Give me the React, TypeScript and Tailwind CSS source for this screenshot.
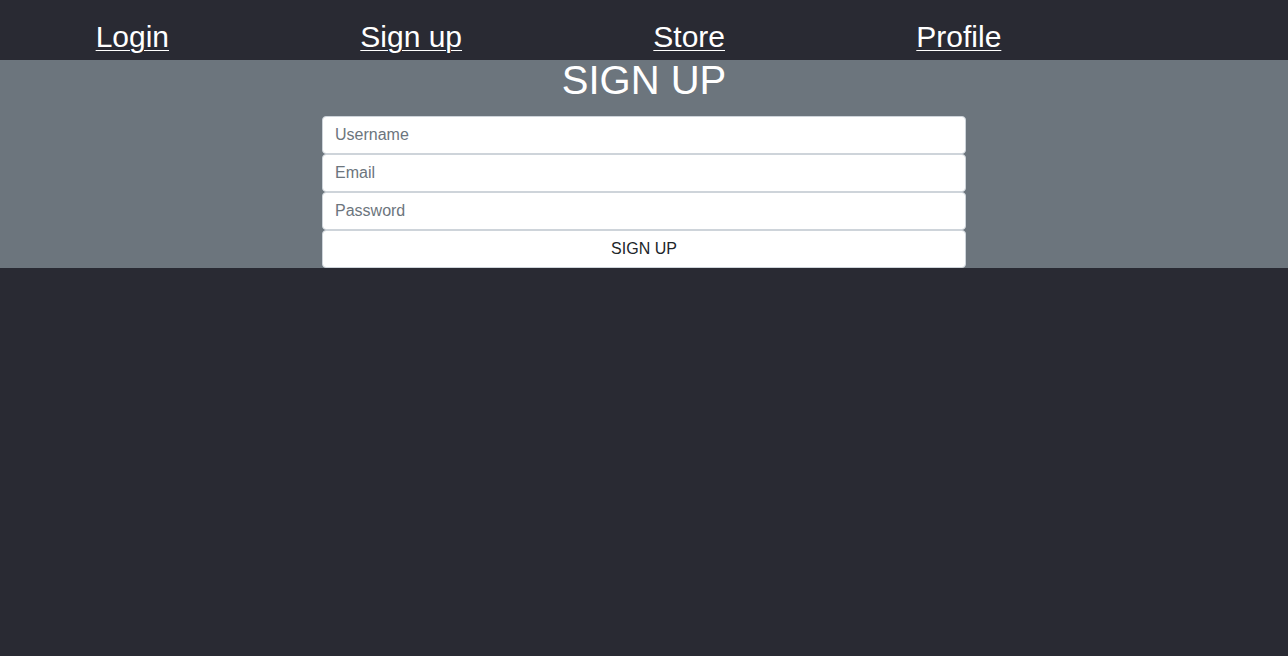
import React from 'react'

const LINKS = ['Login', 'Sign up', 'Store', 'Profile']

export default function App() {
  return (
    <div className="min-h-screen bg-[#292a33] font-['Liberation_Sans',Arial,sans-serif]">
      {/* NAV */}
      <nav className="h-[60px]">
        <ul className="flex w-[1097px] justify-around pt-[20px]">
          {LINKS.map((l) => (
            <li key={l}>
              <a href="#" className="text-[30px] leading-[34px] text-white underline decoration-1 underline-offset-[3px]">
                {l}
              </a>
            </li>
          ))}
        </ul>
      </nav>

      {/* SIGN UP */}
      <section className="bg-[#6c757d]">
        <h1 className="text-center text-[40px] leading-[40px] text-white mb-[16px]">SIGN UP</h1>
        <form className="mx-auto flex w-[644px] flex-col">
          <input
            type="text"
            placeholder="Username"
            className="h-[38px] w-full rounded-[4px] border border-[#ced4da] bg-white px-3 text-base text-[#495057] placeholder:text-[#6c757d] outline-none"
          />
          <input
            type="email"
            placeholder="Email"
            className="h-[38px] w-full rounded-[4px] border border-[#ced4da] bg-white px-3 text-base text-[#495057] placeholder:text-[#6c757d] outline-none"
          />
          <input
            type="password"
            placeholder="Password"
            className="h-[38px] w-full rounded-[4px] border border-[#ced4da] bg-white px-3 text-base text-[#495057] placeholder:text-[#6c757d] outline-none"
          />
          <button
            type="button"
            className="h-[38px] w-full rounded-[4px] border border-[#ced4da] bg-white text-base text-[#212529]"
          >
            SIGN UP
          </button>
        </form>
      </section>
    </div>
  )
}
